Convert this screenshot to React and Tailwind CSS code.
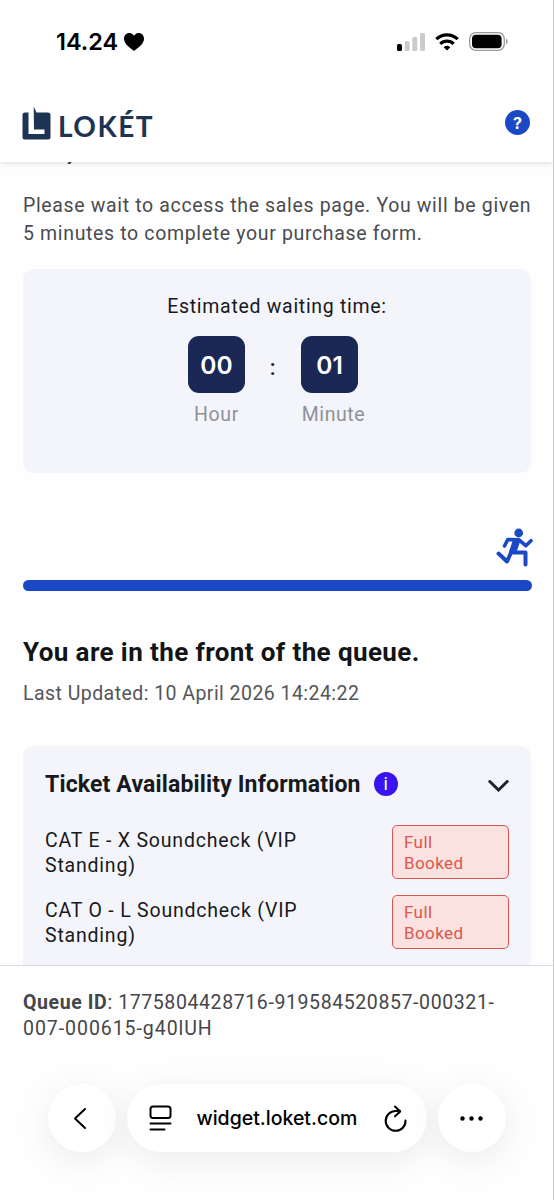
const tickets = [
  { name: 'CAT E - X Soundcheck (VIP', area: 'Standing)' },
  { name: 'CAT O - L Soundcheck (VIP', area: 'Standing)' },
]

function StatusBar() {
  return (
    <div className="flex h-[83px] items-center pl-[56px] pr-[45px] text-black">
      <span className="font-[Inter] text-[23.5px] font-semibold leading-7">14.24</span>
      <svg className="ml-[6px] h-[18px] w-5" viewBox="0 0 20 18" fill="currentColor">
        <path d="M10 18C7 15.600 0 11.500 0 5.800C0 2.400 2.400 0 5.300 0C7.300 0 9 1.100 10 2.800C11 1.100 12.700 0 14.700 0C17.600 0 20 2.400 20 5.800C20 11.500 13 15.600 10 18Z" />
      </svg>
      <div className="ml-auto flex items-center">
        <svg className="h-[18px] w-7" viewBox="0 0 28 18">
          <rect x="0" y="11" width="5" height="7" rx="1.500" fill="#000" />
          <rect x="7.700" y="8" width="5" height="10" rx="1.500" fill="#cbcbcb" />
          <rect x="15.300" y="4" width="5" height="14" rx="1.500" fill="#cbcbcb" />
          <rect x="23" y="0" width="5" height="18" rx="1.500" fill="#cbcbcb" />
        </svg>
        <svg className="ml-[10px] h-[18px] w-6" viewBox="0 0 24 18" fill="none" stroke="#000" strokeWidth="3.200">
          <path d="M1.300 6.200a15.500 15.500 0 0 1 21.400 0" />
          <path d="M5.300 10.900a9.700 9.700 0 0 1 13.400 0" />
          <path d="M12 17.500l-3.300-3.300a5 5 0 0 1 6.600 0z" fill="#000" stroke="none" />
        </svg>
        <svg className="ml-[10px] h-[19px] w-[39px]" viewBox="0 0 39 19">
          <rect x="0.700" y="0.700" width="34.600" height="17.600" rx="6" fill="none" stroke="#999" strokeWidth="1.300" />
          <rect x="3" y="2.800" width="29.600" height="13.400" rx="4" fill="#000" />
          <path d="M37 6.500q1.600.8 1.600 3t-1.600 3z" fill="#999" />
        </svg>
      </div>
    </div>
  )
}

function Header() {
  return (
    <header className="h-[162px] shrink-0 bg-white shadow-[0_2px_5px_rgba(40,50,80,0.13)]">
      <StatusBar />
      <div className="flex items-start justify-between pl-[22px] pr-[23px]">
        <div className="flex text-[#1d3453]">
          <svg className="mt-[23px] h-[34px] w-[29px]" viewBox="0 0 29 34" fill="currentColor">
            <path d="M6.500 6.500H3Q.5 6.500.5 9V31Q.5 33.500 3 33.500H26Q28.500 33.500 28.500 31V9Q28.500 6.500 26 6.500H14.500L11.700.5L12 23.500H22.500V28H6.500Z" />
          </svg>
          <span className="ml-[7px] mt-[27px] font-[Lato] text-[28px] font-bold leading-8 tracking-[1.5px]">
            LOKÉT
          </span>
        </div>
        <span className="mt-[27px] flex size-[25px] items-center justify-center rounded-full bg-[#1b48c4] font-[Inter] text-[16px] font-bold text-white">
          ?
        </span>
      </div>
    </header>
  )
}

function TimeBox({ value }) {
  return (
    <div className="flex size-[57px] items-center justify-center rounded-[11px] bg-[#1b2755] font-[Inter] text-[24.5px] font-semibold tracking-normal text-white">
      {value}
    </div>
  )
}

function Countdown() {
  return (
    <section className="mt-[21px] h-[204px] rounded-[10px] bg-[#f4f5fa] pt-6">
      <p className="text-center text-[19.5px] leading-7 tracking-[0.7px] text-[#18191c]">
        Estimated waiting time:
      </p>
      <div className="mt-[15px] flex justify-center text-[19.5px] leading-7 tracking-[0.6px] text-[#909196]">
        <div className="w-[57px]">
          <TimeBox value="00" />
          <p className="mt-[8px] text-center">Hour</p>
        </div>
        <span className="w-14 pt-[16px] text-center text-[22px] font-medium leading-8 text-[#18191c]">:</span>
        <div className="w-[65px]">
          <TimeBox value="01" />
          <p className="mt-[8px] text-center">Minute</p>
        </div>
      </div>
    </section>
  )
}

function QueueProgress() {
  return (
    <div className="mt-[55px]">
      <svg className="-mr-[2px] ml-auto h-[39px] w-[37px]" viewBox="0 0 37 39" fill="none" stroke="#1b48c4" strokeLinecap="round" strokeLinejoin="round" strokeWidth="4">
        <circle cx="22.700" cy="5" r="4.400" fill="#1b48c4" stroke="none" />
        <path d="M8.500 18l3.300-6.500 11.200.3 6.800 5.900L35 12.700" strokeWidth="3.600" />
        <path d="M15.500 23.500L11 33.500L2.500 25.500M15.500 24.500H29.500V36.500" />
        <path d="M18.500 12h4.500l-4 12h-4.500z" fill="#1b48c4" strokeWidth="3" />
      </svg>
      <div className="-mr-px mt-[13px] h-[11px] rounded-full bg-[#1b48c4]" />
    </div>
  )
}

function Availability() {
  return (
    <section className="mt-[38px] rounded-t-[10px] bg-[#f4f5fa] px-[22px] pb-10 pt-[23px] text-[#18191c]">
      <div className="flex h-[30px] items-center">
        <h2 className="mt-[2px] whitespace-nowrap text-[23px] font-bold leading-[30px] tracking-[0.15px]">
          Ticket Availability Information
        </h2>
        <span className="-mt-px ml-[13px] flex size-6 items-center justify-center rounded-full bg-[#3914ee] text-[18px] leading-none text-white">
          i
        </span>
        <svg className="ml-auto mt-1 h-3 w-[21px]" viewBox="0 0 21 12" fill="none" stroke="#222328" strokeWidth="3" strokeLinecap="round">
          <path d="M1.800 1.500l8.700 8.500 8.700-8.500" />
        </svg>
      </div>
      <div className="mt-[26px] flex flex-col gap-4">
        {tickets.map((ticket) => (
          <div key={ticket.name} className="flex items-start justify-between">
            <p className="mt-[3px] whitespace-nowrap text-[19.5px] leading-[25px] tracking-[0.8px]">
              {ticket.name}
              <br />
              {ticket.area}
            </p>
            <div className="h-[54px] w-[117px] rounded-[5px] border-[1.5px] border-[#d9574f] bg-[#fbe1e0] pl-[11px] pt-[6px] text-[17px] leading-[21px] tracking-[0.4px] text-[#dc574e]">
              Full
              <br />
              Booked
            </div>
          </div>
        ))}
      </div>
    </section>
  )
}

function BrowserBar() {
  const button = 'flex size-[68px] items-center justify-center rounded-full bg-white shadow-[0_8px_36px_rgba(0,0,0,0.08)]'
  return (
    <nav className="mt-[43px] flex justify-center gap-[11px] text-black">
      <div className={button}>
        <svg className="-ml-1 h-[23px] w-[14px]" viewBox="0 0 14 23" fill="none" stroke="currentColor" strokeWidth="2" strokeLinecap="round" strokeLinejoin="round">
          <path d="M12 2L2 11.500L12 21" />
        </svg>
      </div>
      <div className="flex h-[68px] w-[300px] items-center rounded-full bg-white pl-[22px] pr-[20px] shadow-[0_8px_36px_rgba(0,0,0,0.08)]">
        <svg className="h-[26px] w-[23px]" viewBox="0 0 23 26" fill="none" stroke="currentColor" strokeWidth="2" strokeLinecap="round">
          <rect x="1.500" y="1.500" width="20" height="11.500" rx="2.500" />
          <path d="M1.500 18.500h20M1.500 24.500h14" />
        </svg>
        <span className="ml-[25px] whitespace-nowrap font-[Inter] text-[19.5px] font-medium leading-7">
          widget.loket.com
        </span>
        <svg className="ml-auto h-[27px] w-[23px]" viewBox="0 0 23 27" fill="none" stroke="currentColor" strokeWidth="2.100" strokeLinecap="round" strokeLinejoin="round">
          <path d="M21.500 15.500a9.900 9.900 0 1 1-9.700-9.500H16" />
          <path d="M11 1.500l5.200 4.900-5.200 4.900" />
        </svg>
      </div>
      <div className={button}>
        <svg className="h-[5px] w-[23px]" viewBox="0 0 23 5" fill="currentColor">
          <circle cx="2.500" cy="2.500" r="2.200" />
          <circle cx="11.500" cy="2.500" r="2.200" />
          <circle cx="20.500" cy="2.500" r="2.200" />
        </svg>
      </div>
    </nav>
  )
}

function App() {
  return (
    <div className="flex h-[1200px] w-[554px] flex-col overflow-hidden border-r border-[#c9c9cb] bg-[#fefefe] font-[Roboto]">
      <Header />
      <main className="min-h-0 flex-1 overflow-hidden pl-[23px] pr-[22px]">
        {/* tail of the heading scrolled under the header */}
        <div className="ml-[45px] h-[2px] w-[3px] -skew-x-[35deg] bg-[#3a3b3e]" />
        <p className="mt-[28px] whitespace-nowrap text-[19.5px] leading-7 tracking-[0.65px] text-[#4a4b4e]">
          Please wait to access the sales page. You will be given
          <br />
          5 minutes to complete your purchase form.
        </p>
        <Countdown />
        <QueueProgress />
        <h1 className="mt-[45px] whitespace-nowrap text-[26px] font-bold leading-8 tracking-[0.4px] text-[#131416]">
          You are in the front of the queue.
        </h1>
        <p className="mt-[12px] whitespace-nowrap text-[19.5px] leading-7 tracking-[0.45px] text-[#555659]">
          Last Updated: 10 April 2026 14:24:22
        </p>
        <Availability />
      </main>
      <footer className="h-[235px] shrink-0 border-t border-[#d9dae6] bg-[#fefefe] pt-[24px]">
        <p className="whitespace-nowrap pl-[23px] text-[19.5px] leading-[25.5px] tracking-[0.6px] text-[#454649]">
          <b>Queue ID</b>: 1775804428716-919584520857-000321-
          <br />
          <span className="tracking-[0.95px]">007-000615-g40lUH</span>
        </p>
        <BrowserBar />
      </footer>
    </div>
  )
}

export default App
